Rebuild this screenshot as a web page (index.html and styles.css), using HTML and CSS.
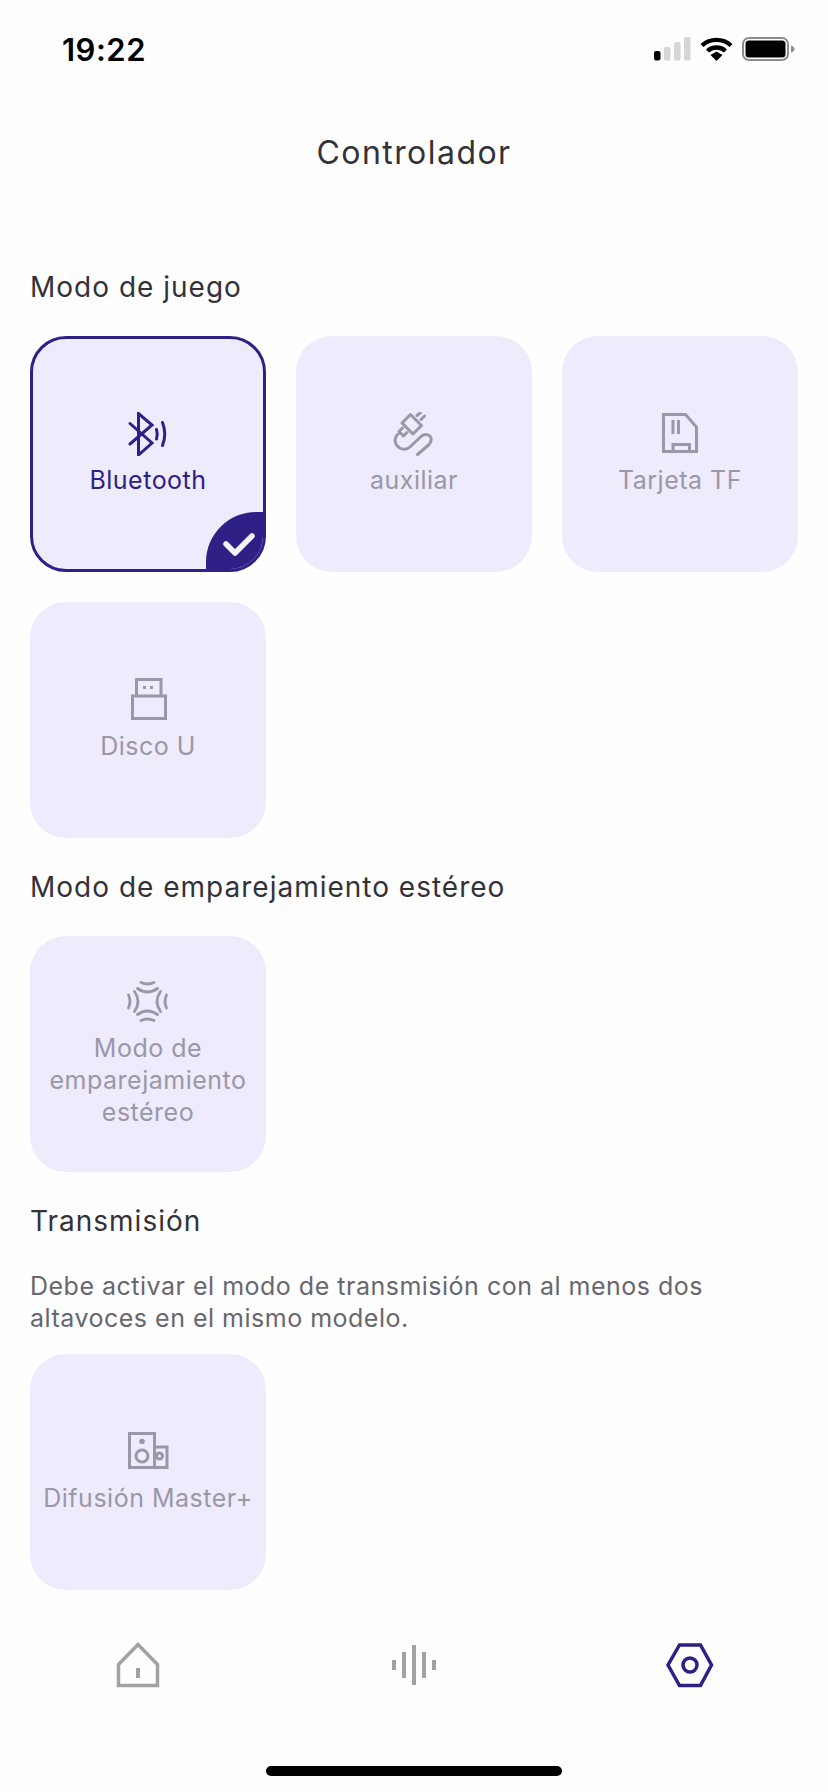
FILE: index.html
```html
<!DOCTYPE html>
<html lang="es">
<head>
<meta charset="utf-8">
<title>Controlador</title>
<link rel="stylesheet" href="styles.css">
</head>
<body>
<div class="app">
  <div class="status">
    <span class="time">19:22</span>
    <div class="status-icons">
      <svg class="sig" width="37" height="24" viewBox="0 0 37 24"><rect x="0" y="14" width="6.5" height="9.5" rx="2" fill="#000"/><rect x="10" y="10" width="6.5" height="13.5" rx="1.5" fill="#d6d6d6"/><rect x="20" y="5" width="6.5" height="18.5" rx="1.5" fill="#d6d6d6"/><rect x="30" y="0" width="6.5" height="23.5" rx="1.5" fill="#d6d6d6"/></svg>
      <svg class="wifi" width="33" height="24" viewBox="0 0 33 24"><path d="M2 8.5C10 1 23 1 31 8.5" fill="none" stroke="#000" stroke-width="4.4"/><path d="M7.5 14C12.5 9.4 20.500 9.400 25.500 14" fill="none" stroke="#000" stroke-width="4.400"/><path d="M10.500 18L16.500 14.500L22.500 18L16.500 24Z" fill="#000"/></svg>
      <svg class="batt" width="53" height="24" viewBox="0 0 53 24"><rect x="1" y="1" width="45" height="22" rx="6" fill="none" stroke="#8c8c8c" stroke-width="2"/><rect x="3.500" y="3.500" width="40" height="17" rx="3.500" fill="#000"/><path d="M49 8.500C51 9 52.500 10.500 52.500 12C52.500 13.500 51 15 49 15.500Z" fill="#8c8c8c"/></svg>
    </div>
  </div>
  <header class="head"><h1 class="head-title">Controlador</h1></header>
  <main class="main">
    <section class="sec">
      <h2 class="sec-title">Modo de juego</h2>
      <div class="grid">
        <div class="card card-on">
          <svg class="ic ic-bt" width="44" height="44" viewBox="0 0 44 44"><path d="M3 11.500L25 31L11.500 43V1.500L25 13L3 32" fill="none" stroke="currentColor" stroke-width="3" stroke-linecap="round" stroke-linejoin="miter"/><path d="M29.500 17.500Q31 22 29.500 27" fill="none" stroke="currentColor" stroke-width="3" stroke-linecap="round"/><path d="M35.500 10.500Q40 22 35.500 33.500" fill="none" stroke="currentColor" stroke-width="3" stroke-linecap="round"/></svg>
          <span class="lbl">Bluetooth</span>
          <span class="badge"><svg width="34" height="28" viewBox="0 0 34 28"><path d="M4 14L13 23L30 6" fill="none" stroke="#f4f2fd" stroke-width="5.500" stroke-linecap="round" stroke-linejoin="round"/></svg></span>
        </div>
        <div class="card">
          <svg class="ic" width="44" height="44" viewBox="0 0 44 44"><g fill="none" stroke="currentColor" stroke-width="3" stroke-linecap="round" stroke-linejoin="round"><path d="M18.500 2.500L29.500 13.500L21 22L10 11Z"/><path d="M25 3.500L28.500 0.500M29 7.500L32.500 4"/><path d="M10.500 16L7 19.500L11.500 24L15 20.500"/><path d="M7.500 21C3 23.500 2 29 4.500 33C8 38 14.500 38.500 18.500 34.500L29 24.500C32.500 21 38 22.500 39 26C39.800 29 38.500 31 36.500 33L25.500 42.500"/></g></svg>
          <span class="lbl">auxiliar</span>
        </div>
        <div class="card">
          <svg class="ic" width="44" height="44" viewBox="0 0 44 44"><g fill="none" stroke="currentColor" stroke-width="3"><path d="M5.500 2.500H27.500L38.500 15V39.500H5.500Z"/><path d="M15 8V22M20.500 8V22"/><path d="M15 39.500V32.500H31.500V39.500"/></g></svg>
          <span class="lbl">Tarjeta TF</span>
        </div>
        <div class="card">
          <svg class="ic" width="44" height="44" viewBox="0 0 44 44"><g fill="none" stroke="currentColor" stroke-width="3"><rect x="6.500" y="18" width="33" height="22.500"/><path d="M10.500 18V1.500H35V18"/></g><rect x="17" y="8" width="3" height="3" fill="currentColor"/><rect x="24" y="8" width="3" height="3" fill="currentColor"/></svg>
          <span class="lbl">Disco U</span>
        </div>
      </div>
    </section>
    <section class="sec">
      <h2 class="sec-title">Modo de emparejamiento estéreo</h2>
      <div class="grid">
        <div class="card">
          <svg class="ic" width="44" height="44" viewBox="0 0 44 44"><g fill="none" stroke="currentColor" stroke-width="2.800" stroke-linecap="round"><path d="M11.500 8.500Q21.500 15.500 31.500 8.500M15 2.500Q21.500 5.500 28 2.500"/><path d="M11.500 34.500Q21.500 27.500 31.500 34.500M15 40.500Q21.500 37.500 28 40.500"/><path d="M8.500 11.500Q15.500 21.500 8.500 31.500M2.500 15Q5.500 21.500 2.500 28"/><path d="M34.500 11.500Q27.500 21.500 34.500 31.500M40.500 15Q37.500 21.500 40.500 28"/></g></svg>
          <span class="lbl">Modo de<br>emparejamiento<br>estéreo</span>
        </div>
      </div>
    </section>
    <section class="sec">
      <h2 class="sec-title sec-title-desc">Transmisión</h2>
      <p class="desc">Debe activar el modo de transmisión con al menos dos<br>altavoces en el mismo modelo.</p>
      <div class="grid">
        <div class="card">
          <svg class="ic" width="44" height="44" viewBox="0 0 44 44"><g fill="none" stroke="currentColor" stroke-width="3"><rect x="3.500" y="3.500" width="25" height="34"/><path d="M28.500 17H41V37.500H28.500"/><circle cx="16" cy="26" r="6"/><circle cx="33.500" cy="26" r="3"/></g><circle cx="16" cy="11.500" r="2.800" fill="currentColor"/></svg>
          <span class="lbl">Difusión Master+</span>
        </div>
      </div>
    </section>
  </main>
  <nav class="nav">
    <svg class="nav-ic nav-off" width="48" height="48" viewBox="0 0 48 48"><path d="M24 3.500L4.500 23.500V44.500H43.500V23.500Z" fill="none" stroke="currentColor" stroke-width="3.500"/><rect x="22" y="27" width="4" height="10" fill="currentColor"/></svg>
    <svg class="nav-ic nav-off" width="48" height="48" viewBox="0 0 48 48"><g fill="currentColor"><rect x="2" y="19" width="4" height="10"/><rect x="12" y="11" width="4" height="26"/><rect x="22" y="4" width="4" height="40"/><rect x="32" y="11" width="4" height="26"/><rect x="42" y="19" width="4" height="10"/></g></svg>
    <svg class="nav-ic nav-on" width="48" height="48" viewBox="0 0 48 48"><path d="M13.500 4H34.500L45.500 24L34.500 44.500H13.500L2 24Z" fill="none" stroke="currentColor" stroke-width="3.500"/><circle cx="24" cy="24" r="7" fill="none" stroke="currentColor" stroke-width="3.500"/></svg>
  </nav>
  <div class="home-bar"><span class="home-pill"></span></div>
</div>
</body>
</html>
```
FILE: styles.css
```css
* { box-sizing: border-box; }
html, body { margin: 0; padding: 0; }
body { background: #fefefe; font-family: Inter, "Liberation Sans", sans-serif; }
.app { width: 828px; height: 1792px; display: flex; flex-direction: column; overflow: hidden; }

.status { height: 100px; padding: 37px 33px 0 62px; display: flex; justify-content: space-between; align-items: flex-start; }
.time { font-size: 31px; line-height: 25px; font-weight: 600; letter-spacing: 0.5px; color: #000; }
.status-icons { display: flex; align-items: flex-start; gap: 9px; }
.status-icons svg { display: block; }

.head { padding: 33px 0 94px; text-align: center; }
.head-title { margin: 0; font-size: 32px; line-height: 40px; font-weight: 400; letter-spacing: 1.45px; color: #333238; }

.main { padding: 0 30px; }
.sec { padding-bottom: 29px; }
.sec-title { margin: 0 0 29px; font-size: 28px; line-height: 40px; font-weight: 400; letter-spacing: 1px; color: #333238; }
.sec-title-desc { margin-bottom: 29px; }
.desc { margin: 0 0 20px; font-size: 25px; line-height: 32px; letter-spacing: 0.5px; color: #68666e; }

.grid { display: grid; grid-template-columns: repeat(3, 236px); gap: 30px; }
.card { position: relative; height: 236px; border-radius: 36px; background: #eeebfc; color: #9a97a8; display: flex; flex-direction: column; align-items: center; justify-content: center; overflow: hidden; text-align: center; }
.card-on { color: #2e2085; border: 3px solid #2e2085; }
.ic { display: block; margin-bottom: 8px; flex: none; }
.ic-bt { margin-left: 2px; }
.lbl { font-size: 25px; line-height: 32px; letter-spacing: 0.5px; }
.badge { position: absolute; right: -3px; bottom: -3px; width: 60px; height: 60px; background: #2e2085; border-radius: 50px 0 0 0; display: flex; align-items: center; justify-content: center; padding: 4px 0 0 6px; }
.badge svg { display: block; }

.nav { margin-top: 22px; display: grid; grid-template-columns: repeat(3, 276px); justify-items: center; }
.nav-ic { display: block; }
.nav-off { color: #a2a2a4; }
.nav-on { color: #2e2085; }

.home-bar { margin-top: 77px; display: flex; justify-content: center; }
.home-pill { display: block; width: 296px; height: 10px; border-radius: 5px; background: #000; }
```
